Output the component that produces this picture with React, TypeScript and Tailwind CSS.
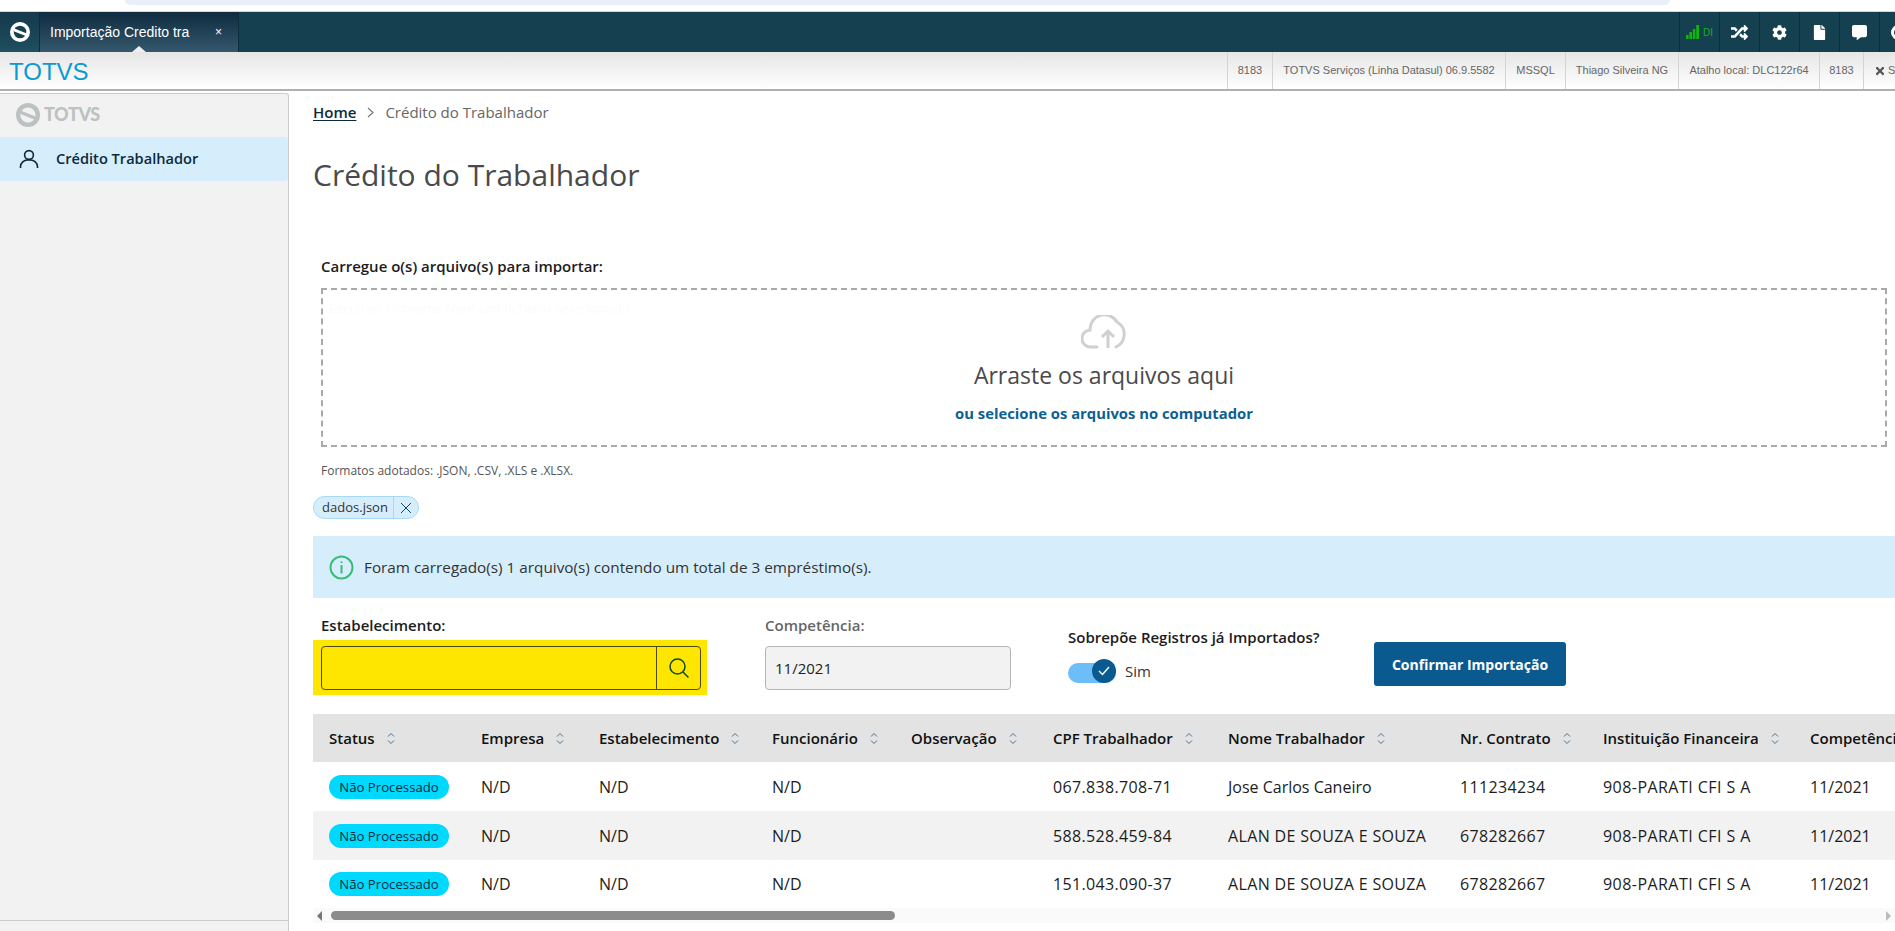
import { FaRandom, FaCog, FaFile, FaCommentAlt, FaTimes } from 'react-icons/fa';

const sans = "font-['Open_Sans',sans-serif]";

const columns = [
    { label: 'Status', width: 152 },
    { label: 'Empresa', width: 118 },
    { label: 'Estabelecimento', width: 173 },
    { label: 'Funcionário', width: 139 },
    { label: 'Observação', width: 142 },
    { label: 'CPF Trabalhador', width: 175 },
    { label: 'Nome Trabalhador', width: 232 },
    { label: 'Nr. Contrato', width: 143 },
    { label: 'Instituição Financeira', width: 207 },
    { label: 'Competência', width: 160 },
];

const rows = [
    { cpf: '067.838.708-71', nome: 'Jose Carlos Caneiro', contrato: '111234234', height: 'h-[49px] bg-white' },
    { cpf: '588.528.459-84', nome: 'ALAN DE SOUZA E SOUZA', contrato: '678282667', height: 'h-[49px] bg-[#f2f2f2]' },
    { cpf: '151.043.090-37', nome: 'ALAN DE SOUZA E SOUZA', contrato: '678282667', height: 'h-[48px] bg-white' },
];

const infoCells = [
    { text: '8183', width: 'w-[45px]' },
    { text: 'TOTVS Serviços (Linha Datasul) 06.9.5582', width: 'w-[233px]' },
    { text: 'MSSQL', width: 'w-[60px]' },
    { text: 'Thiago Silveira NG', width: 'w-[113px]' },
    { text: 'Atalho local: DLC122r64', width: 'w-[141px]' },
    { text: '8183', width: 'w-[44px]' },
];

const Logo = ({ color, size, hole }: { color: string; size: number; hole: string }) => (
    <svg width={size} height={size} viewBox="0 0 24 24">
        <circle cx="12" cy="12" r="12" fill={color} />
        <circle cx="12" cy="12" r="7.6" fill={hole} />
        <path d="M4.5 7.5 L19.5 13.5 L19.5 17 L4.5 11 Z" fill={color} />
    </svg>
);

const SortIcon = () => (
    <svg width="8" height="13" viewBox="0 0 8 13" fill="none" stroke="#3f7196" strokeWidth="1" className="ml-[12px] shrink-0">
        <path d="M1 4.5 L4 1.5 L7 4.5" />
        <path d="M1 8.5 L4 11.5 L7 8.5" />
    </svg>
);

const Signal = () => (
    <svg width="13" height="14" viewBox="0 0 13 14" fill="#0fb40f">
        <rect x="0" y="10" width="2.6" height="4" />
        <rect x="3.4" y="7" width="2.6" height="7" />
        <rect x="6.8" y="4" width="2.6" height="10" />
        <rect x="10.2" y="0" width="2.8" height="14" />
    </svg>
);

const TopBar = () => (
    <div className="h-10 shrink-0 flex bg-[#15404f] font-['Liberation_Sans',sans-serif] text-white">
        <div className="w-10 flex items-center justify-center border-r border-[#0e2c3a] bg-gradient-to-b from-[#15394b] to-[#1f4f60]">
            <Logo color="#ffffff" size={20} hole="#17414f" />
        </div>
        <div className="relative w-[199px] flex items-center pl-[10px] border-r border-[#0e2c3a] bg-gradient-to-b from-[#0f2c40] to-[#35586d] text-sm">
            <span>Importação Credito tra</span>
            <span className="ml-auto mr-[16px] text-xs">×</span>
            <span className="absolute bottom-0 left-[92px] w-0 h-0 border-x-[7px] border-x-transparent border-b-[6px] border-b-[#efefef]" />
        </div>
        <div className="flex-1" />
        <div className="w-10 flex items-center justify-center gap-[4px] border-l border-[#0e2c3a]">
            <Signal />
            <span className="text-[10px] text-[#0fb40f]">DI</span>
        </div>
        <div className="w-10 flex items-center justify-center border-l border-[#0e2c3a] text-[17px]">
            <FaRandom />
        </div>
        <div className="w-10 flex items-center justify-center border-l border-[#0e2c3a] text-[15px]">
            <FaCog />
        </div>
        <div className="w-10 flex items-center justify-center border-l border-[#0e2c3a] text-[15px]">
            <FaFile />
        </div>
        <div className="w-10 flex items-center justify-center border-l border-[#0e2c3a] text-[15px]">
            <FaCommentAlt />
        </div>
        <div className="w-4 flex items-center pl-[11px] border-l border-[#0e2c3a] overflow-hidden">
            <span className="shrink-0 w-[15px] h-[15px] rounded-full border-[3px] border-white" />
        </div>
    </div>
);

const InfoBar = () => (
    <div className="h-[39px] shrink-0 flex items-stretch justify-end bg-gradient-to-b from-[#e6e6e6] to-white border-b-2 border-[#b0b0b0] font-['Liberation_Sans',sans-serif]">
        <span className="ml-[9px] mr-auto self-center pt-[3px] text-[24px] leading-none text-[#0a9ad2]">TOTVS</span>
        {infoCells.map((cell, i) => (
            <div key={i} className={`${cell.width} flex items-center justify-center border-l border-[#d4d4d4] text-[11px] text-[#666] whitespace-nowrap`}>
                {cell.text}
            </div>
        ))}
        <div className="w-8 flex items-center pl-[10px] border-l border-[#d4d4d4] text-[11px] text-[#666] overflow-hidden whitespace-nowrap">
            <FaTimes className="shrink-0 mr-[2px] text-[12px] text-[#555]" />
            Sair
        </div>
    </div>
);

const Sidebar = () => (
    <aside className="w-[289px] shrink-0 flex flex-col bg-[#f2f2f2] border-r border-t border-[#ccc] rounded-tr-[3px] mt-[2px]">
        <div className="h-[43px] flex items-center pl-4 pb-[2px] gap-[4px]">
            <Logo color="#bcc2c2" size={24} hole="#f2f2f2" />
            <span className="font-['Lato',sans-serif] font-black text-[18px] tracking-[-0.4px] text-[#bcc2c2]">TOTVS</span>
        </div>
        <div className="h-11 flex items-center pl-[19px] bg-[#d6edfc] rounded-r-[3px]">
            <svg width="20" height="20" viewBox="0 0 20 20" fill="none" stroke="#0b2a3d" strokeWidth="1.6">
                <circle cx="10" cy="6" r="4.4" />
                <path d="M1.5 19 v-1.5 a7 7 0 0 1 7 -6.5 h3 a7 7 0 0 1 7 6.5 V19" />
            </svg>
            <span className="ml-[17px] text-[14.6px] font-semibold text-[#0b2a3d]">Crédito Trabalhador</span>
        </div>
        <div className="mt-auto mb-[10px] border-t border-[#ccc]" />
    </aside>
);

const DropZone = () => (
    <div className="ml-2 mr-2 mt-[10px] h-[159px] border-2 border-dashed border-[#a9a9a9] flex flex-col items-center relative">
        <span className="absolute left-[6px] top-[8px] text-[13.5px] text-[#fcfcfc]">Escolher Ficheiros Nenhum ficheiro selecionado</span>
        <svg width="46" height="34" viewBox="0 0 46 34" fill="none" stroke="#d0d0d0" strokeWidth="3" className="mt-[25px]">
            <path d="M16 32 H10 A8.5 8.5 0 0 1 9 15 A14.5 14.5 0 0 1 36 7 A14 14 0 0 1 35 32" strokeLinecap="round" />
            <path d="M27 33 V17 M21 22 L27 16 L33 22" />
        </svg>
        <span className="mt-[10px] text-[23px] leading-8 text-[#4a4a4a]">Arraste os arquivos aqui</span>
        <span className="mt-[12px] text-[14.8px] leading-5 font-bold text-[#0c5f93]">ou selecione os arquivos no computador</span>
    </div>
);

const FormRow = () => (
    <div className="flex items-start mt-4 h-[100px]">
        <div className="w-[394px] shrink-0">
            <div className="pl-2 h-[22px] text-[15px] font-semibold text-[#1c1c1c] leading-[22px]">Estabelecimento:</div>
            <div className="mt-1 h-[55px] bg-[#ffe600] pl-2 pr-[6px] pt-[6px]">
                <div className="h-11 flex border border-[#4c4a10] rounded-[4px]">
                    <div className="flex-1" />
                    <div className="w-[44px] flex items-center justify-center border-l border-[#4c4a10]">
                        <svg width="22" height="22" viewBox="0 0 22 22" fill="none" stroke="#0d4a1a" strokeWidth="1.5">
                            <circle cx="9.5" cy="9.5" r="7.5" />
                            <path d="M15 15 L20.5 20.5" />
                        </svg>
                    </div>
                </div>
            </div>
        </div>
        <div className="ml-[58px] w-[246px] shrink-0">
            <div className="h-[22px] text-[15px] font-semibold text-[#666] leading-[22px]">Competência:</div>
            <div className="mt-[10px] h-11 flex items-center pl-[9px] bg-[#f2f2f2] border border-[#b5b5b5] rounded-[4px] text-[15px] text-[#222]">11/2021</div>
        </div>
        <div className="ml-[57px] w-[306px] shrink-0 pt-[11px]">
            <div className="h-6 text-[15px] font-semibold text-[#1c1c1c] leading-6 whitespace-nowrap">Sobrepõe Registros já Importados?</div>
            <div className="mt-[11px] flex items-center">
                <div className="relative w-12 h-5 rounded-full bg-[#6dbdf9]">
                    <div className="absolute right-0 -top-[4px] w-6 h-6 rounded-full bg-[#0a5a8f] flex items-center justify-center">
                        <svg width="12" height="10" viewBox="0 0 12 10" fill="none" stroke="#fff" strokeWidth="1.4"><path d="M1 5 L4.5 8.5 L11 1" /></svg>
                    </div>
                </div>
                <span className="ml-[9px] pb-[4px] text-[15px] text-[#333]">Sim</span>
            </div>
        </div>
        <button className="mt-[28px] w-[192px] h-11 bg-[#0a5a8f] rounded-[3px] text-white text-[14px] font-bold">Confirmar Importação</button>
    </div>
);

const DataTable = () => (
    <div className="w-[1582px] overflow-hidden">
        <table className="table-fixed w-[1641px] text-[16px] text-[#1c1c1c]">
            <colgroup>
                {columns.map((col) => (
                    <col key={col.label} style={{ width: col.width }} />
                ))}
            </colgroup>
            <thead className="bg-[#e3e3e3]">
                <tr className="h-12">
                    {columns.map((col) => (
                        <th key={col.label} className="pl-4 text-left text-[15px] font-semibold text-[#111] whitespace-nowrap">
                            <span className="flex items-center">
                                {col.label}
                                <SortIcon />
                            </span>
                        </th>
                    ))}
                </tr>
            </thead>
            <tbody>
                {rows.map((row) => (
                    <tr key={row.cpf} className={row.height}>
                        <td className="pl-4">
                            <span className="block w-[120px] h-6 leading-6 text-center rounded-full bg-[#00d9ff] text-[13.2px] text-[#0a2a3a] whitespace-nowrap">Não Processado</span>
                        </td>
                        <td className="pl-4">N/D</td>
                        <td className="pl-4">N/D</td>
                        <td className="pl-4">N/D</td>
                        <td className="pl-4"></td>
                        <td className="pl-4 tracking-[0.35px]">{row.cpf}</td>
                        <td className={row.nome === row.nome.toUpperCase() ? 'pl-4 whitespace-nowrap tracking-[0.35px]' : 'pl-4 whitespace-nowrap'}>{row.nome}</td>
                        <td className="pl-4 tracking-[0.35px]">{row.contrato}</td>
                        <td className="pl-4 whitespace-nowrap tracking-[0.45px]">908-PARATI CFI S A</td>
                        <td className="pl-4">11/2021</td>
                    </tr>
                ))}
            </tbody>
        </table>
        <div className="h-[15px] flex items-center bg-[#fafafa] px-1">
            <span className="w-0 h-0 border-y-[5px] border-y-transparent border-r-[5px] border-r-[#777]" />
            <span className="ml-[9px] w-[564px] h-[9px] rounded-full bg-[#8c8c8c]" />
            <span className="ml-auto w-0 h-0 border-y-[5px] border-y-transparent border-l-[5px] border-l-[#bbb]" />
        </div>
    </div>
);

const App = () => (
    <div className={`w-[1895px] h-[931px] overflow-hidden bg-white flex flex-col ${sans}`}>
        <div className="h-3 shrink-0 bg-white border-b border-[#d8d8d8]">
            <div className="h-[5px] ml-[125px] mr-[225px] bg-[#e9eff8] rounded-b-[10px]" />
        </div>
        <TopBar />
        <InfoBar />
        <div className="flex-1 flex min-h-0">
            <Sidebar />
            <main className="flex-1 min-w-0 pl-6">
                <nav className="h-[43px] flex items-center text-[15px]">
                    <span className="font-semibold text-[#0b2a3d] underline underline-offset-2">Home</span>
                    <svg width="7" height="11" viewBox="0 0 7 11" fill="none" stroke="#777" strokeWidth="1.2" className="mx-[11px]"><path d="M1 1 L6 5.5 L1 10" /></svg>
                    <span className="text-[#666]">Crédito do Trabalhador</span>
                </nav>
                <h1 className="mt-[21px] h-10 text-[30px] leading-10 text-[#4a4a4a]">Crédito do Trabalhador</h1>
                <div className="ml-2 mt-[59px] h-6 text-[15px] leading-6 font-semibold text-[#1c1c1c]">Carregue o(s) arquivo(s) para importar:</div>
                <DropZone />
                <div className="ml-2 mt-4 h-4 text-[12px] leading-4 text-[#555]">Formatos adotados: .JSON, .CSV, .XLS e .XLSX.</div>
                <div className="mt-[17px] w-[106px] h-[23px] flex items-center rounded-full bg-[#d6edfc] border border-[#a9d8f7] text-[13px] text-[#333]">
                    <span className="flex-1 pl-[3px] text-center border-r border-[#a9d8f7] leading-[21px]">dados.json</span>
                    <svg width="12" height="12" viewBox="0 0 12 12" fill="none" stroke="#0b4a70" strokeWidth="1" className="mx-[6px]"><path d="M1 1 L11 11 M11 1 L1 11" /></svg>
                </div>
                <div className="mt-[17px] h-[62px] flex items-center pl-4 bg-[#d6edfc] text-[15.3px] text-[#333]">
                    <svg width="25" height="25" viewBox="0 0 25 25" fill="none" stroke="#3cbb78" strokeWidth="2">
                        <circle cx="12.5" cy="12.5" r="11" />
                        <path d="M12.5 10 V18.5 M12.5 6.5 V8" />
                    </svg>
                    <span className="ml-[10px]">Foram carregado(s) 1 arquivo(s) contendo um total de 3 empréstimo(s).</span>
                </div>
                <FormRow />
                <DataTable />
            </main>
        </div>
    </div>
);

export default App;
